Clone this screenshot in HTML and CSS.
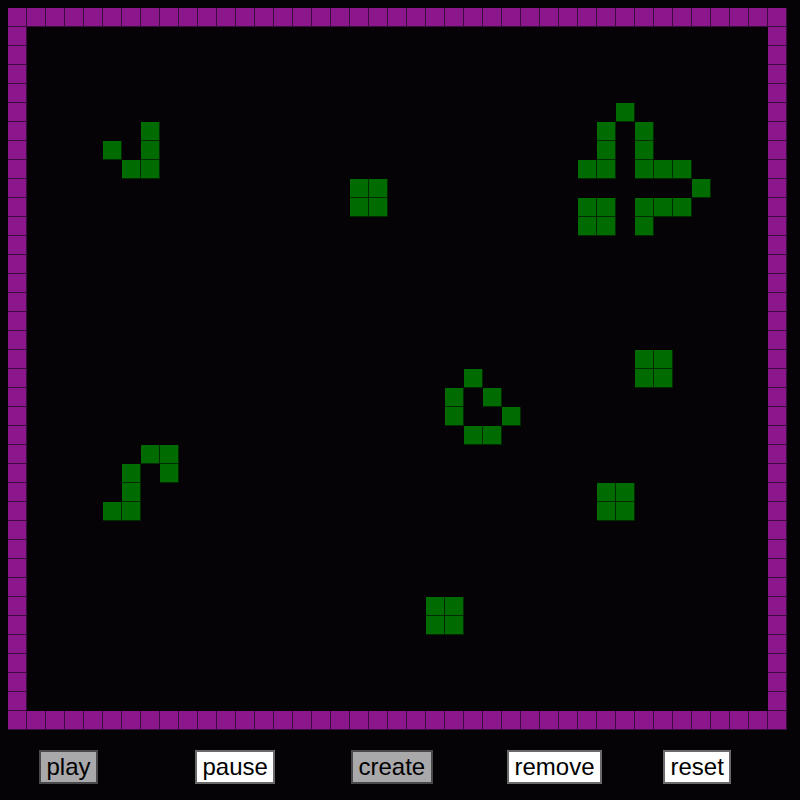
FILE: index.html
```html
<!DOCTYPE html>
<html>
<head>
<meta charset="utf-8">
<title>Life</title>
<link rel="stylesheet" href="styles.css">
</head>
<body>
<div class="board" id="board"></div>
<div class="controls">
  <div class="slot"><button class="btn btn-gray">play</button></div>
  <div class="slot"><button class="btn">pause</button></div>
  <div class="slot"><button class="btn btn-gray">create</button></div>
  <div class="slot"><button class="btn">remove</button></div>
  <div class="slot"><button class="btn">reset</button></div>
</div>
<script src="script.js"></script>
</body>
</html>
```

FILE: styles.css
```css
html, body {
  margin: 0;
  padding: 0;
  background: #050306;
}
body {
  padding: 8px;
  font-family: "Liberation Sans", Arial, sans-serif;
}
.board {
  display: grid;
  grid-template-columns: repeat(41, 19px);
  grid-template-rows: repeat(38, 19px);
  width: 779px;
  height: 722px;
}
.cell {
  box-sizing: border-box;
  width: 19px;
  height: 19px;
}
.wall {
  background: #8c168c;
  border-right: 1px solid #3c0a3c;
  border-bottom: 1px solid #3c0a3c;
}
.live {
  background: #006b00;
  border-right: 1px solid #002a00;
  border-bottom: 1px solid #002a00;
}
.controls {
  display: grid;
  grid-template-columns: repeat(5, 156px);
  padding-left: 31px;
  margin-top: 20px;
}
.slot {
  display: flex;
}
.btn {
  font-family: "Liberation Sans", Arial, sans-serif;
  font-size: 24px;
  line-height: normal;
  padding: 1px 5.5px;
  margin: 0;
  border: 2px solid #6a6a6a;
  background: #ffffff;
  color: #000;
  border-radius: 0;
}
.btn-gray {
  background: #a9a8ab;
  border-color: #4a4a4c;
}
```

FILE: script.js
```js
var COLS = 41, ROWS = 38;
var live = [
  [7,6],[5,7],[7,7],[6,8],[7,8],
  [18,9],[19,9],[18,10],[19,10],
  [32,5],[31,6],[33,6],[31,7],[33,7],
  [30,8],[31,8],[33,8],[34,8],[35,8],
  [36,9],
  [30,10],[31,10],[33,10],[34,10],[35,10],
  [30,11],[31,11],[33,11],
  [33,18],[34,18],[33,19],[34,19],
  [24,19],[23,20],[25,20],[23,21],[26,21],[24,22],[25,22],
  [7,23],[8,23],[6,24],[8,24],[6,25],[5,26],[6,26],
  [31,25],[32,25],[31,26],[32,26],
  [22,31],[23,31],[22,32],[23,32]
];
var set = {};
live.forEach(function (p) { set[p[0] + ',' + p[1]] = true; });
var board = document.getElementById('board');
var frag = document.createDocumentFragment();
for (var r = 0; r < ROWS; r++) {
  for (var c = 0; c < COLS; c++) {
    var d = document.createElement('div');
    d.className = 'cell';
    if (r === 0 || c === 0 || r === ROWS - 1 || c === COLS - 1) {
      d.className += ' wall';
    } else if (set[c + ',' + r]) {
      d.className += ' live';
    }
    frag.appendChild(d);
  }
}
board.appendChild(frag);
```
